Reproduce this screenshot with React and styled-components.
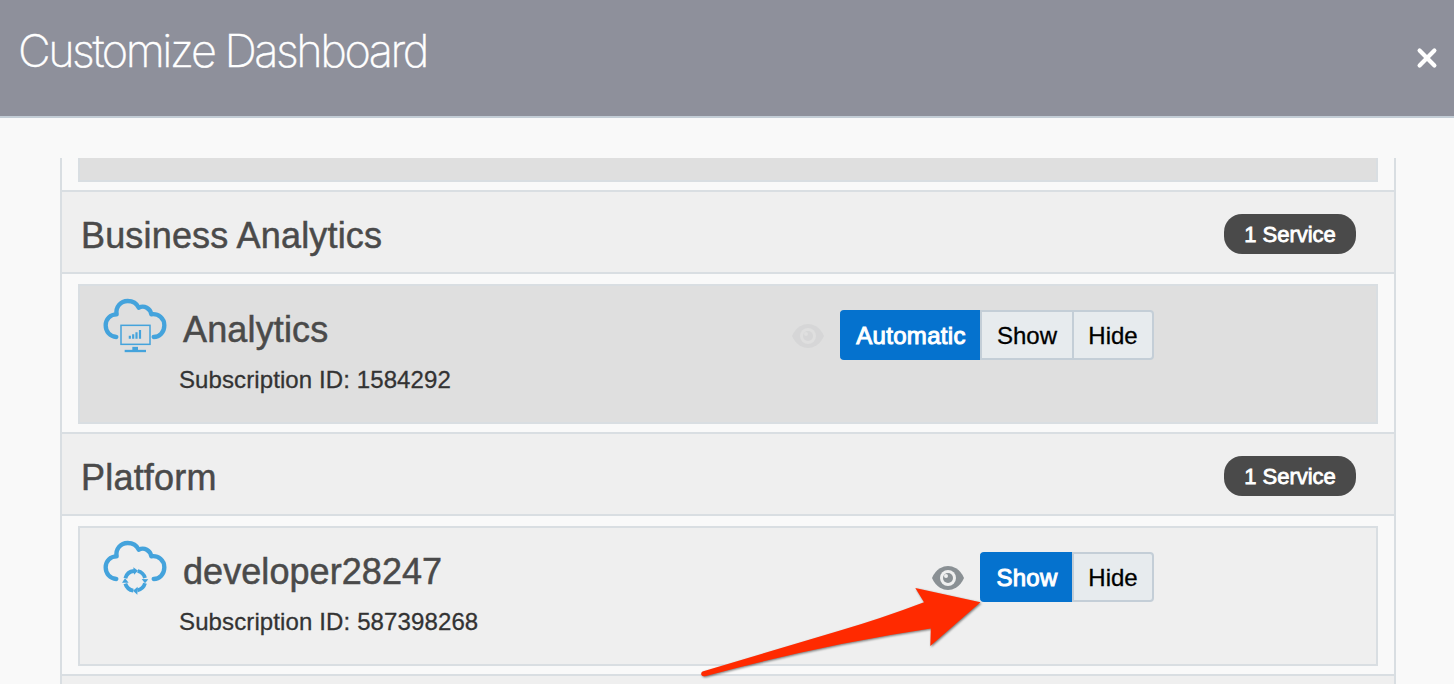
import React from "react";
import styled, { createGlobalStyle } from "styled-components";

const GlobalStyle = createGlobalStyle`
  *, *::before, *::after { box-sizing: border-box; }
  body {
    margin: 0;
    background: #f9f9f9;
    font-family: "Liberation Sans", Arial, sans-serif;
    -webkit-font-smoothing: antialiased;
  }
`;

const Page = styled.main`
  position: relative;
  height: 684px;
  overflow: hidden;
  background: #f9f9f9;
`;

const Header = styled.header`
  display: flex;
  justify-content: space-between;
  height: 118px;
  padding: 0 16px 0 18px;
  background: #8e909b;
  border-bottom: 2px solid #c3cdd6;
`;

const Title = styled.h1`
  margin: 0;
  padding-top: 21px;
  color: #fff;
  font-family: Inter, "Liberation Sans", sans-serif;
  font-size: 45px;
  font-weight: 200;
  line-height: 59px;
  letter-spacing: -2.45px;
  white-space: nowrap;
  -webkit-text-stroke: 0.4px #fff;
`;

const CloseButton = styled.button`
  display: block;
  width: 22px;
  height: 22px;
  margin-top: 47px;
  padding: 0;
  border: 0;
  background: none;

  svg { display: block; }
`;

const ServiceList = styled.div`
  display: flex;
  flex-direction: column;
  height: 526px;
  margin: 40px 58px 0 60px;
  border: solid #d9dee2;
  border-width: 0 2px;
  overflow: hidden;
`;

const SectionHeader = styled.div`
  display: flex;
  flex: none;
  align-items: center;
  justify-content: space-between;
  height: 84px;
  padding: 4px 38px 0 19px;
  background: #efefef;
  border: solid #d9dee2;
  border-width: 2px 0;
`;

const SectionTitle = styled.h2`
  margin: 0;
  padding-top: 3px;
  color: #4a4a4a;
  font-size: 36px;
  font-weight: 400;
  line-height: 42px;
  letter-spacing: ${(p) => p.$tracking}px;
  -webkit-text-stroke: 0.5px #4a4a4a;
`;

const CountPill = styled.span`
  width: 132px;
  height: 40px;
  border-radius: 18px;
  background: #4a4a4a;
  color: #fff;
  font-size: 22px;
  line-height: 42px;
  text-align: center;
  -webkit-text-stroke: 0.8px #fff;
`;

const Card = styled.article`
  display: flex;
  flex: none;
  height: ${(p) => (p.$clipped ? 24 : 140)}px;
  margin: ${(p) => (p.$clipped ? 0 : 10)}px 16px 8px;
  padding: ${(p) => (p.$clipped ? "0" : "9px 222px 0 20px")};
  background: ${(p) => (p.$shaded ? "#dfdfdf" : "#efefef")};
  border: 2px solid #d9dee2;
  ${(p) => p.$clipped && "border-top: 0;"}
`;

const CloudSvg = styled.svg`
  display: block;
  flex: none;
  width: 70px;
  height: 60px;
`;

const ServiceText = styled.div`
  flex: 1;
  padding: 14px 0 0 9px;
`;

const ServiceName = styled.h3`
  margin: 0 0 0 4px;
  color: #4a4a4a;
  font-size: 36px;
  font-weight: 400;
  line-height: 42px;
  letter-spacing: ${(p) => p.$tracking}px;
  -webkit-text-stroke: 0.5px #4a4a4a;
`;

const Subscription = styled.p`
  margin: 15px 0 0;
  color: #333;
  font-size: 24px;
  line-height: 28px;
  letter-spacing: ${(p) => p.$tracking}px;
  -webkit-text-stroke: 0.3px #333;
`;

const Controls = styled.div`
  display: flex;
  align-items: center;
  height: 50px;
  margin-top: 15px;
`;

const EyeSvg = styled.svg`
  display: block;
  width: 32px;
  height: 24px;
  margin: 2px 16px 0 0;
  opacity: ${(p) => (p.$faint ? 0.1 : 1)};
`;

const Option = styled.button`
  width: ${(p) => p.$width}px;
  height: 50px;
  padding: 1px 0 0 ${(p) => (p.$active ? 2 : 0)}px;
  border: solid ${(p) => (p.$active ? "#0572ce" : "#c4ced7")};
  border-width: 2px ${(p) => (p.$last ? 2 : 0)}px 2px ${(p) => (p.$active ? 0 : 2)}px;
  border-radius: ${(p) => (p.$first ? "4px 0 0 4px" : p.$last ? "0 4px 4px 0" : "0")};
  background: ${(p) => (p.$active ? "#0572ce" : "#e7ebee")};
  color: ${(p) => (p.$active ? "#fff" : "#000")};
  font: 24px/45px "Liberation Sans", Arial, sans-serif;
  letter-spacing: ${(p) => (p.$active ? 0.3 : 0)}px;
  -webkit-text-stroke: ${(p) => (p.$active ? "1px #fff" : "0.3px #000")};
`;

const Pointer = styled.svg`
  position: absolute;
  left: 690px;
  top: 576px;
  width: 300px;
  height: 108px;
  filter: drop-shadow(1px 1.5px 1.2px rgba(0, 0, 0, 0.5));
  pointer-events: none;
`;

const CLOUD =
  "M79 156C60 155 47 140 47 121C47 102 61 88 80 88C76 66 92 48 113 48C127 48 140 55 146 68C163 60 181 70 184 88C206 85 223 101 223 121C223 142 209 156 191 156";

function CloudIcon({ kind }) {
  return (
    <CloudSvg viewBox="30 30 210 180" fill="none" stroke="#44a3dc">
      <path d={CLOUD} strokeWidth="13" strokeLinecap="round" strokeLinejoin="round" />
      {kind === "analytics" ? (
        <>
          <rect x="93" y="121" width="87" height="57" strokeWidth="4.500" />
          <path d="M119.500 161V152M129.500 161V148M139.500 161V142M150 161V135" strokeWidth="6.500" />
          <path d="M104 198H168" strokeWidth="7" />
          <path d="M127 191H144" strokeWidth="11" />
        </>
      ) : (
        <>
          <path
            d="M106 154A30 30 0 0 1 132 132M143 132A30 30 0 0 1 165 153M165 169A30 30 0 0 1 142 190M130 191A30 30 0 0 1 106 170"
            strokeWidth="11.500"
          />
          <g fill="#44a3dc" stroke="none">
            <path d="M130 121L144 131L132 143Z" />
            <path d="M155 156L175 157L165 169Z" />
            <path d="M143 179L129 191L142 203Z" />
            <path d="M96 167L105 154L116 167Z" />
          </g>
        </>
      )}
    </CloudSvg>
  );
}

function EyeIcon({ faint }) {
  const bg = faint ? "#dfdfdf" : "#efefef";
  return (
    <EyeSvg viewBox="0 0 96 72" $faint={faint}>
      <path d="M0 36Q8 17 24 7Q36 0 48 0Q60 0 72 7Q88 17 96 36Q88 55 72 65Q60 72 48 72Q36 72 24 65Q8 55 0 36Z" fill="#8a9094" />
      <circle cx="48" cy="36" r="24" fill={bg} />
      <circle cx="48" cy="36" r="15" fill="#8a9094" />
      <circle cx="42" cy="30" r="6" fill={bg} />
    </EyeSvg>
  );
}

function Section({ title, tracking }) {
  return (
    <SectionHeader>
      <SectionTitle $tracking={tracking}>{title}</SectionTitle>
      <CountPill>1 Service</CountPill>
    </SectionHeader>
  );
}

function Service({ kind, name, nameTracking, id, idTracking, shaded, options }) {
  return (
    <Card $shaded={shaded}>
      <CloudIcon kind={kind} />
      <ServiceText>
        <ServiceName $tracking={nameTracking}>{name}</ServiceName>
        <Subscription $tracking={idTracking}>Subscription ID: {id}</Subscription>
      </ServiceText>
      <Controls>
        <EyeIcon faint={shaded} />
        {options.map(([label, width], i) => (
          <Option
            key={label}
            $width={width}
            $active={i === 0}
            $first={i === 0}
            $last={i === options.length - 1}
          >
            {label}
          </Option>
        ))}
      </Controls>
    </Card>
  );
}

export default function App() {
  return (
    <Page>
      <GlobalStyle />
      <Header>
        <Title>Customize Dashboard</Title>
        <CloseButton aria-label="Close">
          <svg width="22" height="22" viewBox="0 0 22 22">
            <path d="M3.600 3.600L18.400 18.400M18.400 3.600L3.600 18.400" stroke="#fff" strokeWidth="4.200" strokeLinecap="round" />
          </svg>
        </CloseButton>
      </Header>
      <ServiceList>
        <Card $shaded $clipped />
        <Section title="Business Analytics" tracking={0.17} />
        <Service
          kind="analytics"
          name="Analytics"
          nameTracking={0.15}
          id="1584292"
          idTracking={0.1}
          shaded
          options={[["Automatic", 140], ["Show", 92], ["Hide", 82]]}
        />
        <Section title="Platform" tracking={0.2} />
        <Service
          kind="platform"
          name="developer28247"
          nameTracking={0.07}
          id="587398268"
          idTracking={0.12}
          options={[["Show", 92], ["Hide", 82]]}
        />
        <SectionHeader />
      </ServiceList>
      <Pointer viewBox="690 576 300 108">
        <path
          d="M702.500 671.500Q700.500 673 701.500 675Q702.500 676.800 706 676Q820 645 930.800 628.500L930.300 646L980.500 602.300L915.300 588L924 602.300Q880 619 840 630.500Z"
          fill="#ff2a00"
        />
      </Pointer>
    </Page>
  );
}
